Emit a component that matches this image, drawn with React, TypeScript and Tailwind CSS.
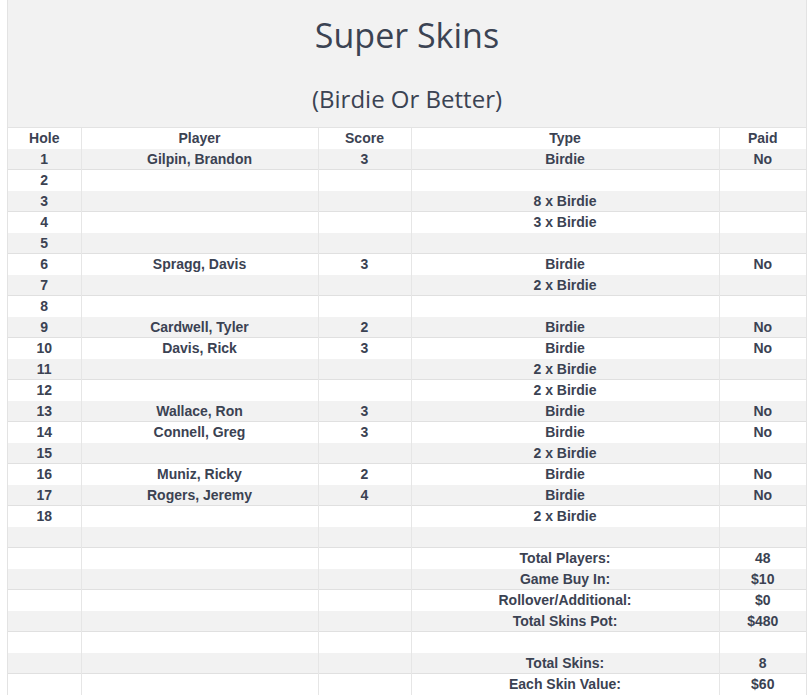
import React from "react";

type Row = {
  hole?: string;
  player?: string;
  score?: string;
  type?: string;
  paid?: string;
};

const rows: Row[] = [
  { hole: "1", player: "Gilpin, Brandon", score: "3", type: "Birdie", paid: "No" },
  { hole: "2" },
  { hole: "3", type: "8 x Birdie" },
  { hole: "4", type: "3 x Birdie" },
  { hole: "5" },
  { hole: "6", player: "Spragg, Davis", score: "3", type: "Birdie", paid: "No" },
  { hole: "7", type: "2 x Birdie" },
  { hole: "8" },
  { hole: "9", player: "Cardwell, Tyler", score: "2", type: "Birdie", paid: "No" },
  { hole: "10", player: "Davis, Rick", score: "3", type: "Birdie", paid: "No" },
  { hole: "11", type: "2 x Birdie" },
  { hole: "12", type: "2 x Birdie" },
  { hole: "13", player: "Wallace, Ron", score: "3", type: "Birdie", paid: "No" },
  { hole: "14", player: "Connell, Greg", score: "3", type: "Birdie", paid: "No" },
  { hole: "15", type: "2 x Birdie" },
  { hole: "16", player: "Muniz, Ricky", score: "2", type: "Birdie", paid: "No" },
  { hole: "17", player: "Rogers, Jeremy", score: "4", type: "Birdie", paid: "No" },
  { hole: "18", type: "2 x Birdie" },
  {},
  { type: "Total Players:", paid: "48" },
  { type: "Game Buy In:", paid: "$10" },
  { type: "Rollover/Additional:", paid: "$0" },
  { type: "Total Skins Pot:", paid: "$480" },
  {},
  { type: "Total Skins:", paid: "8" },
  { type: "Each Skin Value:", paid: "$60" },
];

const cell = "h-[21px] p-0 text-center align-middle border-l border-[#e6e6e6] first:border-l-0 leading-[21px]";
const grayCell = cell + " shadow-[inset_0_-1px_0_#e0e0e0]";

export default function App() {
  return (
    <div className="min-h-screen bg-white pl-[7px] pr-[4px]">
      <div
        className="w-[800px] border-x border-[#e3e3e3] text-[#3b4252]"
        style={{ fontFamily: '"Liberation Sans", Arial, sans-serif' }}
      >
        <div
          className="h-[128px] bg-[#f2f2f2] border-b border-[#e3e3e3] flex flex-col items-center"
          style={{ fontFamily: '"Open Sans", "Noto Sans", sans-serif' }}
        >
          <h1 className="mt-[12px] text-[34px] leading-[46px] font-normal text-[#3b4353]">Super Skins</h1>
          <h2 className="mt-[24px] text-[24px] leading-[34px] font-normal text-[#3b4353]">(Birdie Or Better)</h2>
        </div>
        <table className="w-full border-collapse table-fixed text-[14px] font-bold">
          <colgroup>
            <col className="w-[73px]" />
            <col className="w-[237px]" />
            <col className="w-[93px]" />
            <col className="w-[308px]" />
            <col />
          </colgroup>
          <thead>
            <tr className="bg-white">
              <th className={cell}>Hole</th>
              <th className={cell}>Player</th>
              <th className={cell}>Score</th>
              <th className={cell}>Type</th>
              <th className={cell}>Paid</th>
            </tr>
          </thead>
          <tbody>
            {rows.map((r, i) => {
              const c = i % 2 === 0 ? grayCell : cell;
              return (
                <tr key={i} className={i % 2 === 0 ? "bg-[#f2f2f2]" : "bg-white"}>
                  <td className={c}>{r.hole}</td>
                  <td className={c}>{r.player}</td>
                  <td className={c}>{r.score}</td>
                  <td className={c}>{r.type}</td>
                  <td className={c}>{r.paid}</td>
                </tr>
              );
            })}
          </tbody>
        </table>
      </div>
    </div>
  );
}
